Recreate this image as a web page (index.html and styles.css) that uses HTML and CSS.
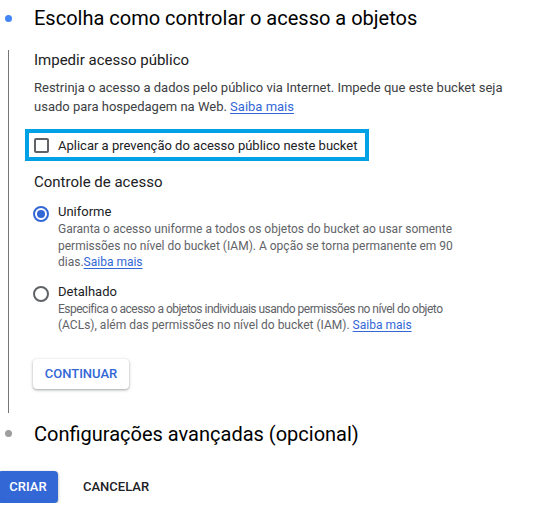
FILE: index.html
```html
<!DOCTYPE html>
<html lang="pt">
<head>
<meta charset="utf-8">
<link rel="stylesheet" href="styles.css">
</head>
<body>
<div class="step-head">
  <span class="dot dot-active"></span>
  <h2 class="step-title">Escolha como controlar o acesso a objetos</h2>
</div>
<div class="step-body">
  <h3 class="sub">Impedir acesso público</h3>
  <p class="para">Restrinja o acesso a dados pelo público via Internet. Impede que este bucket seja usado para hospedagem na Web. <a class="link" href="#">Saiba mais</a></p>
  <div class="highlight">
    <span class="checkbox"></span>
    <span class="check-label">Aplicar a prevenção do acesso público neste bucket</span>
  </div>
  <h3 class="sub sub-access">Controle de acesso</h3>
  <div class="option">
    <span class="radio radio-on"></span>
    <div class="opt-text">
      <div class="opt-label">Uniforme</div>
      <div class="opt-desc">Garanta o acesso uniforme a todos os objetos do bucket ao usar somente permissões no nível do bucket (IAM). A opção se torna permanente em 90 dias.<a class="link" href="#">Saiba mais</a></div>
    </div>
  </div>
  <div class="option option-2">
    <span class="radio"></span>
    <div class="opt-text">
      <div class="opt-label">Detalhado</div>
      <div class="opt-desc"><span class="tight">Especifica o acesso a objetos individuais usando permissões no nível do objeto</span><br>(ACLs), além das permissões no nível do bucket (IAM). <a class="link" href="#">Saiba mais</a></div>
    </div>
  </div>
  <button class="btn btn-raised">CONTINUAR</button>
</div>
<div class="step-head step-head-2">
  <span class="dot dot-idle"></span>
  <h2 class="step-title">Configurações avançadas (opcional)</h2>
</div>
<div class="actions">
  <button class="btn btn-primary">CRIAR</button>
  <button class="btn btn-text">CANCELAR</button>
</div>
</body>
</html>
```

FILE: styles.css
```css
* { box-sizing: border-box; }
body {
  margin: 0;
  font-family: Roboto, "Liberation Sans", sans-serif;
  color: #202124;
  background: #fff;
  width: 540px;
}
.step-head {
  display: flex;
  align-items: center;
  height: 24px;
  margin-top: 6px;
}
.step-head-2 { margin-top: 9px; }
.dot {
  width: 7px;
  height: 7px;
  border-radius: 50%;
  margin-left: 5px;
  margin-right: 22px;
  flex: none;
}
.dot-active { background: #4285f4; }
.dot-idle { background: #9e9e9e; }
.step-title {
  margin: 0;
  font-size: 20px;
  line-height: 24px;
  font-weight: 400;
  color: #000;
}
.step-body {
  margin-top: 20px;
  margin-left: 8px;
  border-left: 1px solid #757575;
  padding: 0 0 24px 25px;
}
.sub {
  margin: 0;
  font-size: 15px;
  line-height: 20px;
  font-weight: 400;
  color: #202124;
}
.sub-access { margin-top: 11px; }
.para {
  margin: 8px 0 0;
  font-size: 13px;
  line-height: 19px;
  color: #3c4043;
  width: 480px;
}
.link {
  color: #3367d6;
  text-decoration: underline;
  text-underline-offset: 2px;
}
.highlight {
  display: inline-flex;
  align-items: center;
  margin: 13px 0 0 -9px;
  height: 32px;
  width: 344px;
  border: 4px solid #00a2e5;
  padding-left: 5px;
}
.checkbox {
  width: 15px;
  height: 15px;
  border: 2px solid #5f6368;
  border-radius: 2px;
  flex: none;
}
.check-label {
  margin-left: 9px;
  font-size: 13px;
  color: #202124;
}
.option {
  display: flex;
  margin-top: 11px;
}
.option-2 { margin-top: 12px; }
.radio {
  width: 16px;
  height: 16px;
  border: 2px solid #5f6368;
  border-radius: 50%;
  margin: 3px 0 0 -1px;
  flex: none;
  display: flex;
  align-items: center;
  justify-content: center;
}
.radio-on { border-color: #3367d6; }
.radio-on::after {
  content: "";
  width: 8px;
  height: 8px;
  border-radius: 50%;
  background: #3367d6;
}
.opt-text { margin-left: 9px; width: 405px; }
.opt-label {
  font-size: 13px;
  line-height: 18px;
  color: #202124;
}
.opt-desc {
  font-size: 12px;
  line-height: 16.5px;
  color: #5f6368;
}
.tight {
  letter-spacing: -0.5px;
  white-space: nowrap;
}
.btn {
  font-family: Roboto, "Liberation Sans", sans-serif;
  font-size: 13px;
  font-weight: 500;
  border: none;
  border-radius: 4px;
  cursor: pointer;
  background: transparent;
  padding: 0 11px;
}
.btn-raised {
  display: block;
  margin: 25px 0 0 -1px;
  height: 30px;
  width: 96px;
  background: #fff;
  color: #3367d6;
  box-shadow: 0 1px 2px rgba(60,64,67,.3), 0 1px 3px 1px rgba(60,64,67,.15);
}
.actions {
  display: flex;
  align-items: center;
  margin-top: 25px;
}
.btn-primary {
  height: 32px;
  width: 60px;
  margin-left: -2px;
  background: #3367d6;
  color: #fff;
  box-shadow: 0 1px 2px rgba(60,64,67,.3), 0 1px 3px 1px rgba(60,64,67,.15);
}
.btn-text {
  height: 32px;
  margin-left: 9px;
  padding: 0 16px;
  color: #202124;
}
```
